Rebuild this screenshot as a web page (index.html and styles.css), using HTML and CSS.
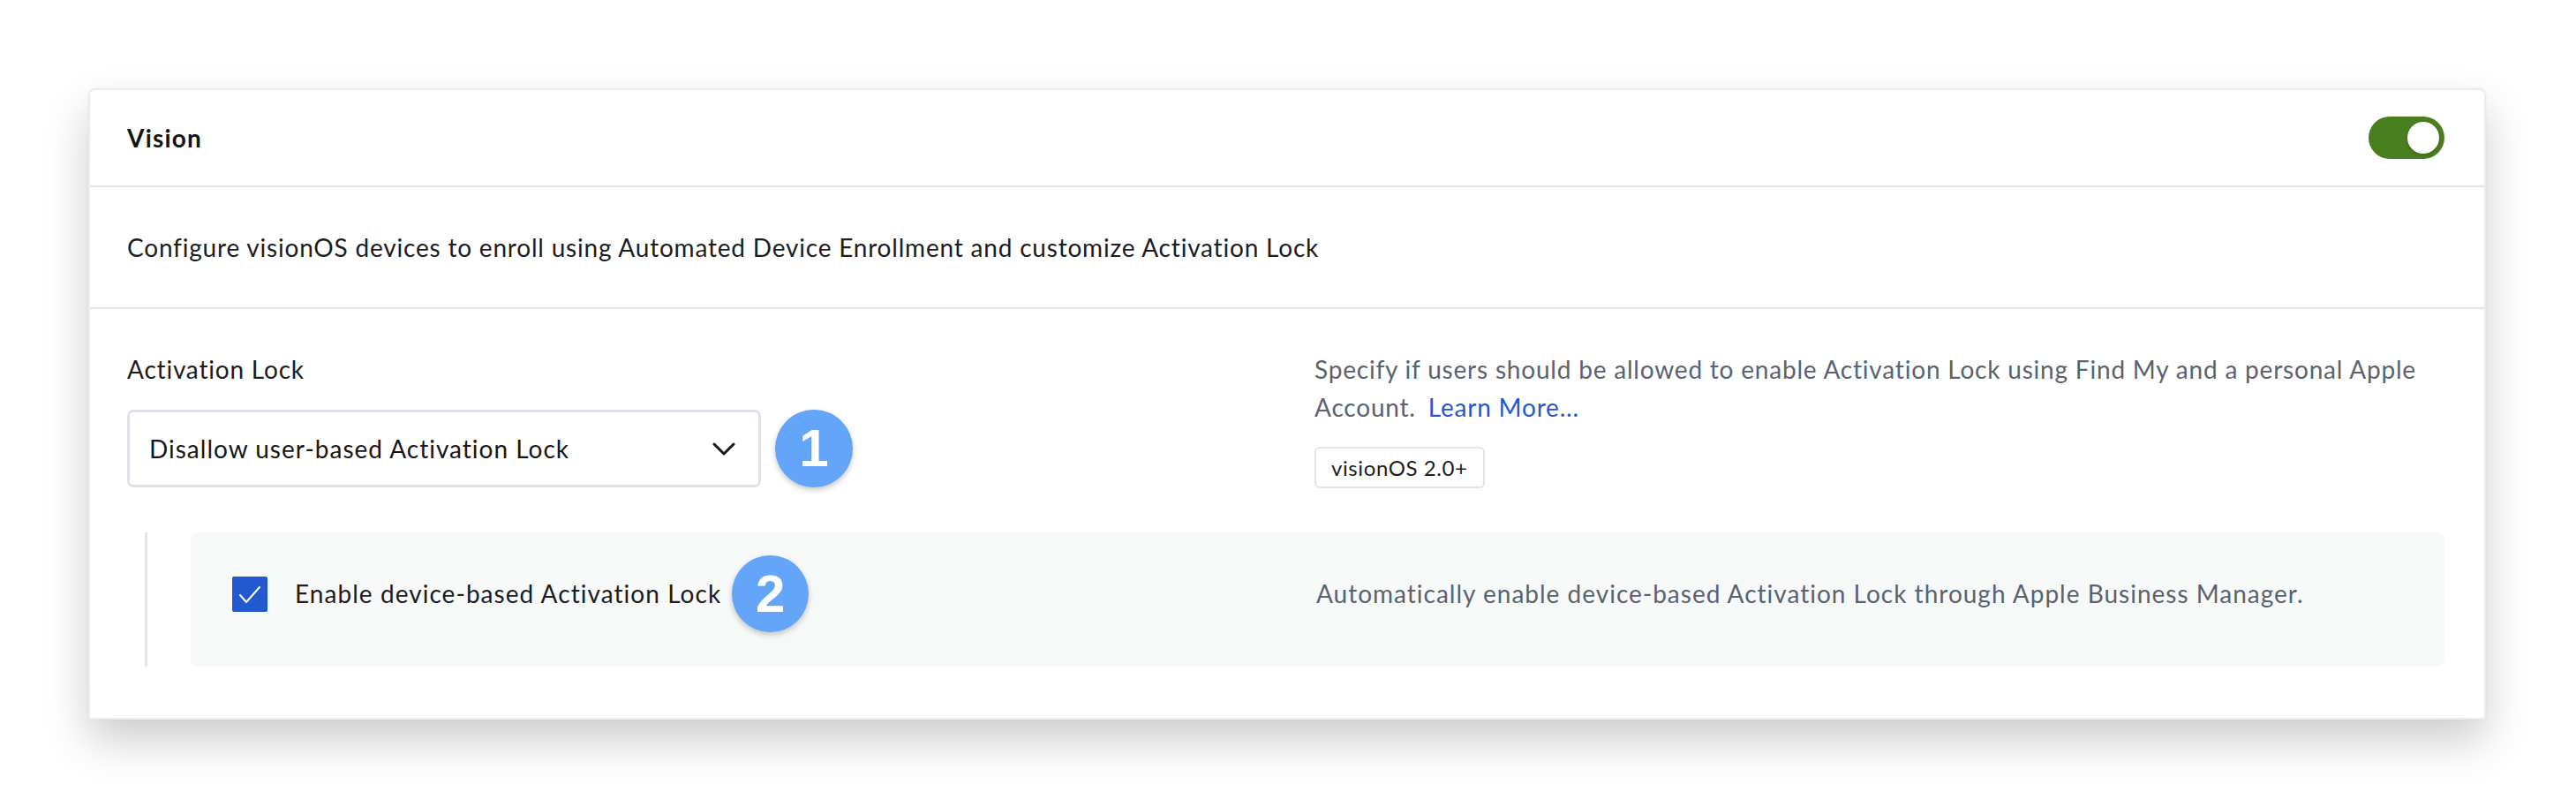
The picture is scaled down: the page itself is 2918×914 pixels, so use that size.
FILE: index.html
```html
<!DOCTYPE html>
<html lang="en">
<head>
<meta charset="utf-8">
<title>Vision</title>
<link rel="stylesheet" href="styles.css">
</head>
<body>
  <div class="card">
    <div class="card-head">
      <h2 class="card-title">Vision</h2>
      <span class="toggle"><span class="toggle-knob"></span></span>
    </div>
    <div class="card-desc">Configure visionOS devices to enroll using Automated Device Enrollment and customize Activation Lock</div>
    <div class="card-body">
      <div class="setting">
        <div class="setting-main">
          <div class="setting-label">Activation Lock</div>
          <div class="select-wrap">
            <div class="select">
              <span class="select-value">Disallow user-based Activation Lock</span>
              <svg class="chevron" width="26" height="15" viewBox="0 0 26 15"><polyline points="2,2 13,13 24,2" fill="none" stroke="#1a1a1a" stroke-width="3" stroke-linecap="round" stroke-linejoin="round"/></svg>
            </div>
            <span class="marker marker-select">1</span>
          </div>
        </div>
        <div class="setting-help">
          <p class="help-text">Specify if users should be allowed to enable Activation Lock using Find My and a personal Apple Account. <a class="help-link" href="#">Learn More...</a></p>
          <span class="tag">visionOS 2.0+</span>
        </div>
      </div>
      <div class="nested">
        <div class="panel">
          <div class="check-row">
            <span class="checkbox"><svg width="40" height="40" viewBox="0 0 40 40"><polyline points="9,21 16,29 31,12" fill="none" stroke="#ffffff" stroke-width="2" stroke-linecap="round" stroke-linejoin="round"/></svg></span>
            <span class="check-label">Enable device-based Activation Lock<span class="marker marker-check">2</span></span>
          </div>
          <div class="panel-help">Automatically enable device-based Activation Lock through Apple Business Manager.</div>
        </div>
      </div>
    </div>
  </div>
</body>
</html>
```
FILE: styles.css
```css
* { box-sizing: border-box; }
html, body { margin: 0; padding: 0; background: #ffffff; }
body {
  font-family: Lato, "Noto Sans", sans-serif;
  font-size: 28px;
  line-height: 43px;
  letter-spacing: 0.8px;
  color: #1c1c1e;
  padding: 100px 0 100px 100px;
}
.card {
  width: 2716px;
  background: #ffffff;
  border: 2px solid #ebebf0;
  border-radius: 8px 8px 0 0;
  box-shadow: 0 24px 50px rgba(0,0,0,0.20), 0 0 3px rgba(0,0,0,0.05);
}
.card-head {
  height: 110px;
  display: flex;
  align-items: center;
  justify-content: space-between;
  padding: 0 45px 0 42px;
  border-bottom: 2px solid #e4e4eb;
}
.card-title {
  margin: 0;
  font-size: 28px;
  font-weight: 700;
  letter-spacing: 1.2px;
  color: #141414;
}
.toggle {
  width: 86px;
  height: 48px;
  border-radius: 24px;
  background: #4a7f1f;
  display: flex;
  justify-content: flex-end;
  align-items: center;
  padding: 0 6px;
}
.toggle-knob {
  width: 36px;
  height: 36px;
  border-radius: 50%;
  background: #ffffff;
  box-shadow: 0 2px 4px rgba(0,0,0,0.18);
}
.card-desc {
  height: 138px;
  display: flex;
  align-items: center;
  padding: 0 45px 0 42px;
  border-bottom: 2px solid #e4e4eb;
  color: #1c1c1e;
}
.card-body {
  padding: 47px 45px 58px 42px;
}
.setting {
  display: grid;
  grid-template-columns: 1280px 1fr;
  column-gap: 65px;
}
.setting-label { color: #1c1c1e; }
.select-wrap {
  position: relative;
  width: 718px;
  margin-top: 24px;
}
.select {
  height: 88px;
  border: 3px solid #dfe2ea;
  border-radius: 7px;
  display: flex;
  align-items: center;
  justify-content: space-between;
  padding: 0 26px 0 22px;
  background: #fff;
}
.select-value { color: #161616; letter-spacing: 1px; }
.chevron { display: block; }
.marker {
  position: absolute;
  width: 88px;
  height: 88px;
  border-radius: 50%;
  background: #63a5f8;
  color: #ffffff;
  font-family: "Liberation Sans", Arial, sans-serif;
  font-weight: 700;
  font-size: 60px;
  line-height: 88px;
  letter-spacing: 0;
  text-align: center;
  box-shadow: 0 3px 6px rgba(0,0,0,0.22);
}
.marker-select {
  left: 734px;
  top: 0;
}
.setting-help { color: #5a6270; }
.help-text { margin: 0; }
.help-link { color: #1f58d6; text-decoration: none; margin-left: 6px; }
.tag {
  display: inline-block;
  margin-top: 23px;
  height: 47px;
  line-height: 43px;
  padding: 0 17px;
  border: 2px solid #e1e4ea;
  border-radius: 6px;
  font-size: 24px;
  letter-spacing: 0.6px;
  color: #1c1c1e;
}
.nested {
  margin-top: 50px;
  margin-left: 20px;
  border-left: 3px solid #e4e6eb;
  padding-left: 49px;
}
.panel {
  background: #f7f9f9;
  border-radius: 8px;
  display: grid;
  grid-template-columns: 1164px 1fr;
  column-gap: 64px;
  padding: 48px 47px 61px 47px;
}
.check-row {
  display: flex;
  align-items: center;
}
.checkbox {
  width: 40px;
  height: 40px;
  background: #2359d0;
  border-radius: 2px;
  flex: none;
  margin-right: 31px;
}
.checkbox svg { display: block; }
.check-label {
  position: relative;
  color: #1c1c1e;
  letter-spacing: 1.05px;
}
.marker-check {
  left: calc(100% + 12px);
  top: -22px;
  width: 87px;
  height: 87px;
  line-height: 87px;
}
.panel-help { color: #5a6270; letter-spacing: 1.0px; }
```
